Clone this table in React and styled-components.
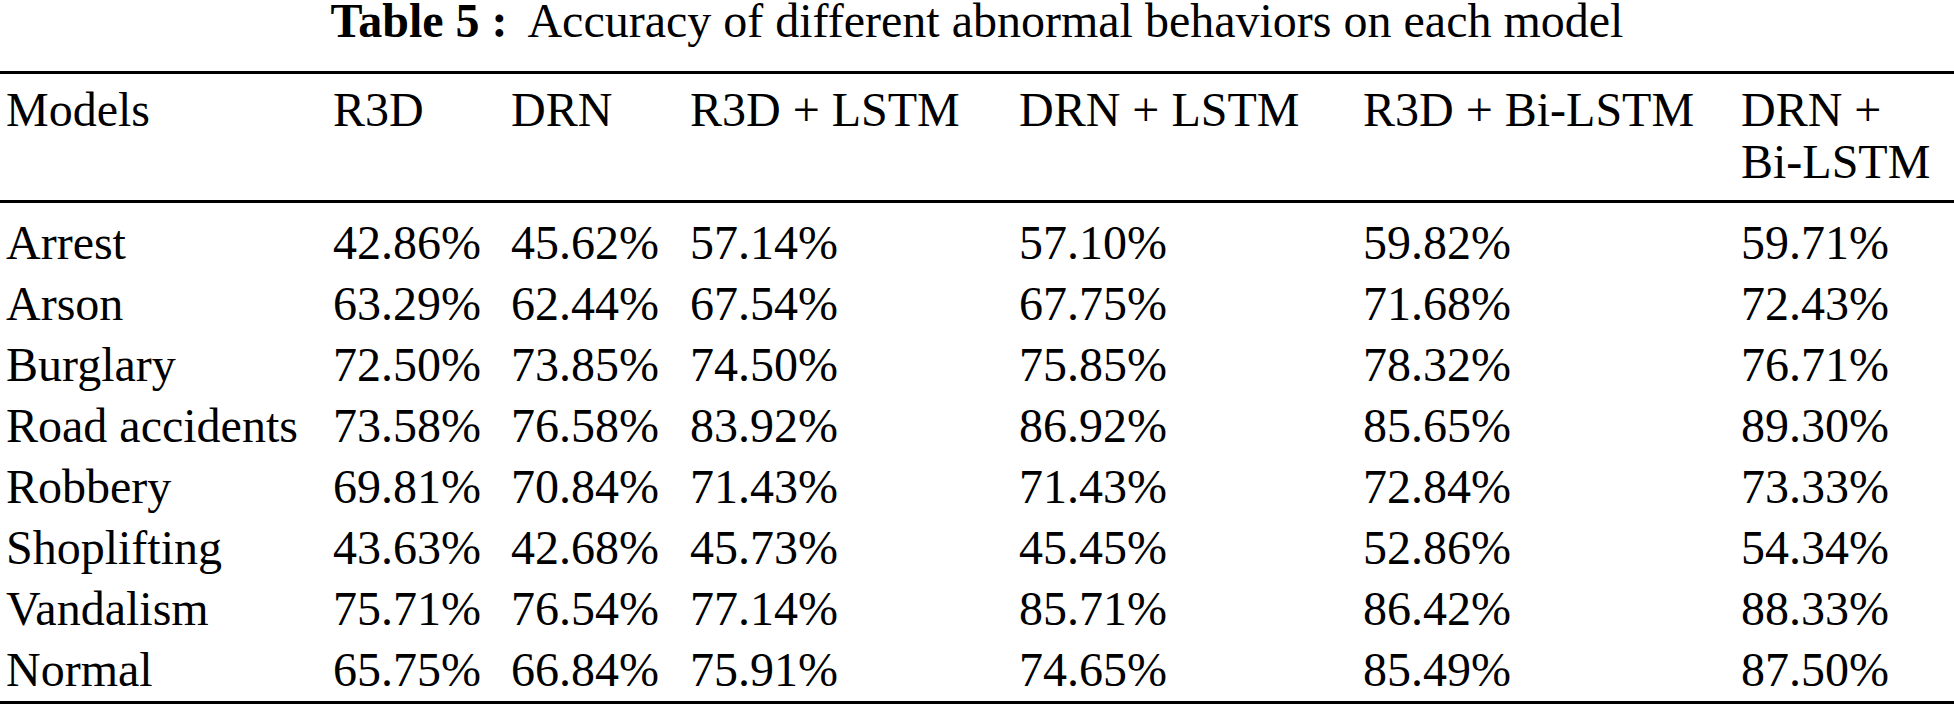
import React from "react";
import styled, { createGlobalStyle } from "styled-components";

const headers = [
  "Models",
  "R3D",
  "DRN",
  "R3D + LSTM",
  "DRN + LSTM",
  "R3D + Bi-LSTM",
  "DRN + Bi-LSTM",
];

const rows = [
  ["Arrest", "42.86%", "45.62%", "57.14%", "57.10%", "59.82%", "59.71%"],
  ["Arson", "63.29%", "62.44%", "67.54%", "67.75%", "71.68%", "72.43%"],
  ["Burglary", "72.50%", "73.85%", "74.50%", "75.85%", "78.32%", "76.71%"],
  ["Road accidents", "73.58%", "76.58%", "83.92%", "86.92%", "85.65%", "89.30%"],
  ["Robbery", "69.81%", "70.84%", "71.43%", "71.43%", "72.84%", "73.33%"],
  ["Shoplifting", "43.63%", "42.68%", "45.73%", "45.45%", "52.86%", "54.34%"],
  ["Vandalism", "75.71%", "76.54%", "77.14%", "85.71%", "86.42%", "88.33%"],
  ["Normal", "65.75%", "66.84%", "75.91%", "74.65%", "85.49%", "87.50%"],
];

const serif = `"Liberation Serif", "Times New Roman", serif`;

const GlobalStyle = createGlobalStyle`
  html, body {
    margin: 0;
    padding: 0;
    background: #fff;
    color: #000;
    font-family: ${serif};
  }
`;

const Figure = styled.div`
  width: 1954px;
  font-family: ${serif};
`;

// caption sits right against the top edge in the scan
const Caption = styled.div`
  text-align: center;
  font-size: 48px;
  line-height: 42px;
  height: 42px;
  margin-bottom: 29px;
  white-space: nowrap;
`;

const CaptionLabel = styled.b`
  font-weight: 700;
  margin-right: 0.22em;
`;

const Grid = styled.div`
  display: grid;
  grid-template-columns: 333px 178px 179px 329px 344px 378px 213px;
  font-size: 48px;
`;

const HeadRow = styled(Grid)`
  border-top: 3px solid #000;
  border-bottom: 3px solid #000;
  padding: 10px 0 12px;
  line-height: 52px;
  min-height: 104px;
`;

const Body = styled.div`
  padding: 9px 0 1px;
  border-bottom: 3px solid #000;
`;

const BodyRow = styled(Grid)`
  line-height: 61px;
`;

const Cell = styled.div`
  padding-left: ${(p) => (p.$first ? "6px" : "0")};
  white-space: ${(p) => (p.$wrap ? "normal" : "nowrap")};
`;

export default function App() {
  return (
    <>
      <GlobalStyle />
      <Figure>
        <Caption>
          <CaptionLabel>Table 5 :</CaptionLabel>{" "}
          Accuracy of different abnormal behaviors on each model
        </Caption>
        <HeadRow>
          {headers.map((h, i) => (
            <Cell key={h} $first={i === 0} $wrap={i === headers.length - 1}>
              {h}
            </Cell>
          ))}
        </HeadRow>
        <Body>
          {rows.map((row) => (
            <BodyRow key={row[0]}>
              {row.map((v, i) => (
                <Cell key={i} $first={i === 0}>
                  {v}
                </Cell>
              ))}
            </BodyRow>
          ))}
        </Body>
      </Figure>
    </>
  );
}
